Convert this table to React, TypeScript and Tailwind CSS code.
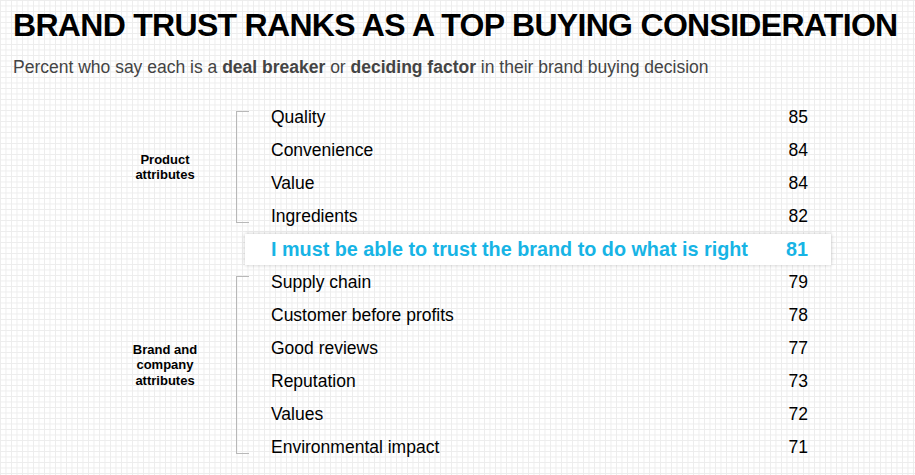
const productRows: [string, number][] = [
  ["Quality", 85],
  ["Convenience", 84],
  ["Value", 84],
  ["Ingredients", 82],
];

const brandRows: [string, number][] = [
  ["Supply chain", 79],
  ["Customer before profits", 78],
  ["Good reviews", 77],
  ["Reputation", 73],
  ["Values", 72],
  ["Environmental impact", 71],
];

// ─── Row ──────────────────────────────────────────────────────────────────────

function Row({ label, value }: { label: string; value: number }) {
  return (
    <div className="flex h-[33px] items-center justify-between text-[17.5px] leading-[33px] text-black">
      <span>{label}</span>
      <span>{value}</span>
    </div>
  );
}

// ─── Group with bracket ───────────────────────────────────────────────────────

function Group({ title, rows }: { title: string[]; rows: [string, number][] }) {
  return (
    <div className="flex">
      <div className="ml-[100px] flex w-[130px] flex-col items-center justify-center text-center text-[13px] font-bold leading-[15.5px] text-black">
        {title.map((t) => (
          <span key={t}>{t}</span>
        ))}
      </div>
      <div className="ml-[6px] my-[10px] w-[13px] border-y border-l border-[#b8b8b8]" />
      <div className="w-[559px] pl-[22px]">
        {rows.map(([l, v]) => (
          <Row key={l} label={l} value={v} />
        ))}
      </div>
    </div>
  );
}

export default function App() {
  return (
    <div className="min-h-screen w-full bg-white bg-[linear-gradient(to_right,#ececec_1px,transparent_1px),linear-gradient(to_bottom,#ececec_1px,transparent_1px)] bg-[size:5.5px_5.5px] font-['Liberation_Sans',Arial,sans-serif]">
      <div className="pl-[13px] pt-[9px]">
        <h1 className="whitespace-nowrap text-[32px] font-bold leading-[33px] tracking-[-0.7px] text-black">
          BRAND TRUST RANKS AS A TOP BUYING CONSIDERATION
        </h1>
        <p className="mt-[17px] whitespace-nowrap text-[17.5px] leading-[17px] text-[#444]">
          Percent who say each is a <b>deal breaker</b> or <b>deciding factor</b> in their brand buying decision
        </p>
      </div>

      <div className="mt-[25px]">
        <Group title={["Product", "attributes"]} rows={productRows} />

        <div className="flex h-[33px] items-center">
          <div className="ml-[245px] flex h-[31px] w-[586px] items-center justify-between bg-white pl-[26px] pr-[23px] text-[19.8px] font-bold text-[#17b4e5] shadow-[0_0_4px_rgba(0,0,0,0.22)]">
            <span className="whitespace-nowrap">I must be able to trust the brand to do what is right</span>
            <span>81</span>
          </div>
        </div>

        <Group title={["Brand and", "company", "attributes"]} rows={brandRows} />
      </div>
    </div>
  );
}
